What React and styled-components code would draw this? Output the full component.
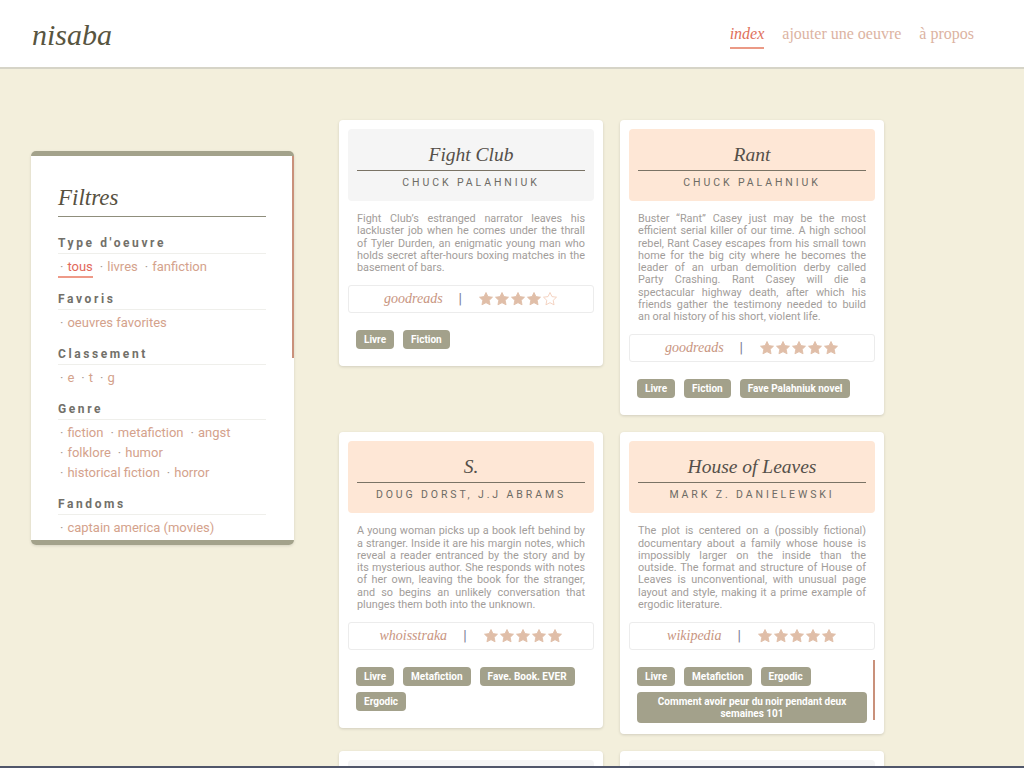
import React from "react";
import styled, { createGlobalStyle, css } from "styled-components";

const GlobalStyle = createGlobalStyle`
  * { box-sizing: border-box; }
  html { scrollbar-width: none; }
  body {
    margin: 0;
    background: #f3efdc;
    font-family: Roboto, "Noto Sans", sans-serif;
  }
`;

const thinScroll = css`
  &::-webkit-scrollbar { width: 2px; }
  &::-webkit-scrollbar-track { background: transparent; }
  &::-webkit-scrollbar-thumb { background: #c9917b; }
`;

/* drawn thumb: the headless browser hides native scrollbars */
const drawnThumb = (top, height) => css`
  position: relative;
  &::after {
    content: "";
    position: absolute;
    top: ${top}px;
    right: 0;
    width: 2px;
    height: ${height}px;
    background: #c9917b;
  }
`;

const Header = styled.header`
  height: 69px;
  background: #fff;
  border-bottom: 2px solid #d6d4c7;
  display: flex;
  align-items: center;
  justify-content: space-between;
  padding: 0 50px 0 32px;
`;

const Logo = styled.div`
  font-family: "Liberation Serif", serif;
  font-style: italic;
  font-size: 30px;
  color: #58553f;
  margin-top: 2px;
`;

const Nav = styled.nav`
  display: flex;
  gap: 18px;
  align-items: center;
`;

const NavLink = styled.a`
  font-family: "Liberation Serif", serif;
  font-size: 16px;
  color: ${(p) => (p.$active ? "#e0705a" : "#dcb3a2")};
  font-style: ${(p) => (p.$active ? "italic" : "normal")};
  border-bottom: 2px solid ${(p) => (p.$active ? "#eb9a86" : "transparent")};
  padding-bottom: 4px;
  margin-top: 6px;
  text-decoration: none;
`;

const Main = styled.main`
  display: flex;
  align-items: flex-start;
  gap: 45px;
  padding: 51px 0 40px 31px;
`;

const Sidebar = styled.aside`
  flex: none;
  width: 263px;
  height: 394px;
  margin-top: 31px;
  background: #fff;
  border-top: 5px solid #a3a28b;
  border-bottom: 5px solid #a3a28b;
  border-radius: 5px;
  box-shadow: 0 1px 3px rgba(0, 0, 0, 0.12);
  overflow-y: auto;
  padding: 0 28px 30px 27px;
  ${thinScroll}
  ${drawnThumb(0, 202)}
`;

const SideTitle = styled.h2`
  margin: 0;
  padding: 26px 0 2px;
  font-family: "Liberation Serif", serif;
  font-style: italic;
  font-weight: normal;
  font-size: 23px;
  line-height: 32px;
  color: #57513f;
  border-bottom: 1px solid #8f8e7c;
`;

const Section = styled.section`
  margin-top: ${(p) => (p.$first ? "19px" : "14px")};
`;

const SectionHead = styled.h3`
  margin: 0;
  font-size: 12px;
  line-height: 14px;
  font-weight: 700;
  letter-spacing: 2.6px;
  color: #727069;
  padding-bottom: 3px;
  border-bottom: 1px solid #efefeb;
`;

const LinkList = styled.div`
  margin-top: 3px;
  display: flex;
  flex-wrap: wrap;
  column-gap: 5px;
`;

const FilterLink = styled.a`
  font-size: 13px;
  line-height: 20px;
  height: ${(p) => (p.$active ? "21px" : "20px")};
  color: ${(p) => (p.$active ? "#e2685a" : "#d4a28c")};
  border-bottom: ${(p) => (p.$active ? "2px solid #ee9a88" : "none")};
  padding-left: 2px;
  text-decoration: none;
  white-space: nowrap;
`;

const Dot = styled.span`
  color: #a79a94;
  margin-right: 4px;
`;

const Grid = styled.div`
  display: grid;
  grid-template-columns: repeat(2, 264px);
  gap: 17px;
  align-items: start;
`;

const Card = styled.article`
  background: #fff;
  border-radius: 4px;
  box-shadow: 0 1px 3px rgba(0, 0, 0, 0.14);
  padding: 9px;
`;

const CardHead = styled.div`
  background: ${(p) => (p.$tone === "peach" ? "#fee7d6" : "#f5f5f5")};
  border-radius: 4px;
  padding: 11px 9px;
`;

const Title = styled.h2`
  margin: 0;
  font-family: "Liberation Serif", serif;
  font-style: italic;
  font-weight: normal;
  font-size: 19.5px;
  line-height: 30px;
  text-align: center;
  color: #55504a;
  border-bottom: 1px solid #7a7365;
`;

const Author = styled.div`
  margin-top: 5px;
  font-size: 10.5px;
  line-height: 14px;
  letter-spacing: 2.9px;
  text-transform: uppercase;
  text-align: center;
  color: #6d6b65;
`;

const Desc = styled.p`
  margin: 12px 9px 11px;
  font-size: 10.85px;
  line-height: 12.25px;
  text-align: justify;
  color: #a29d9a;
`;

const RatingBox = styled.div`
  height: 28px;
  border: 1px solid #ececec;
  border-radius: 3px;
  display: flex;
  align-items: center;
  justify-content: center;
  gap: 16px;
`;

const Source = styled.span`
  font-family: "Liberation Serif", serif;
  font-style: italic;
  font-size: 14px;
  color: #c8957f;
`;

const Sep = styled.span`
  font-size: 14px;
  color: #7a7e96;
`;

const Stars = styled.span`
  display: flex;
`;

const Tags = styled.div`
  margin-top: 9px;
  padding: 8px;
  display: flex;
  flex-wrap: wrap;
  gap: 6px 9px;
  max-height: 66px;
  overflow-y: auto;
  ${thinScroll}
  ${(p) => p.$overflow && drawnThumb(1, 60)}
`;

const Tag = styled.span`
  display: inline-flex;
  align-items: center;
  justify-content: center;
  text-align: center;
  min-height: 19px;
  padding: 3.5px 8px;
  line-height: 12px;
  border-radius: 4px;
  background: #a3a18b;
  color: #fff;
  font-size: 10px;
  font-weight: 700;
`;

const BottomBar = styled.div`
  position: fixed;
  left: 0;
  right: 0;
  bottom: 0;
  height: 2px;
  background: #50566a;
`;

const STAR =
  "M12 2.2l2.95 6.2 6.8.9-4.95 4.7 1.25 6.75L12 17.5l-6.05 3.25L7.2 14l-4.95-4.7 6.8-.9L12 2.2z";

function StarIcon({ filled }) {
  return (
    <svg width="16" height="16" viewBox="0 0 24 24">
      <path
        d={STAR}
        fill={filled ? "#e0bea8" : "none"}
        stroke={filled ? "#e0bea8" : "#f2cdb9"}
        strokeWidth="1.3"
        strokeLinejoin="round"
      />
    </svg>
  );
}

const filters = [
  { head: "Type d'oeuvre", links: ["tous", "livres", "fanfiction"], active: "tous" },
  { head: "Favoris", links: ["oeuvres favorites"] },
  { head: "Classement", links: ["e", "t", "g"] },
  {
    head: "Genre",
    links: ["fiction", "metafiction", "angst", "folklore", "humor", "historical fiction", "horror"],
  },
  {
    head: "Fandoms",
    links: [
      "captain america (movies)",
      "marvel cinematic universe",
      "harry potter",
      "the witcher",
      "good omens",
      "sherlock (tv)",
    ],
  },
  { head: "Auteurs", links: ["chuck palahniuk", "doug dorst", "mark z. danielewski"] },
  { head: "Langue", links: ["français", "english"] },
];

const books = [
  {
    title: "Fight Club",
    author: "Chuck Palahniuk",
    tone: "gray",
    desc: "Fight Club’s estranged narrator leaves his lackluster job when he comes under the thrall of Tyler Durden, an enigmatic young man who holds secret after-hours boxing matches in the basement of bars.",
    source: "goodreads",
    rating: 4,
    tags: ["Livre", "Fiction"],
  },
  {
    title: "Rant",
    author: "Chuck Palahniuk",
    tone: "peach",
    desc: "Buster “Rant” Casey just may be the most efficient serial killer of our time. A high school rebel, Rant Casey escapes from his small town home for the big city where he becomes the leader of an urban demolition derby called Party Crashing. Rant Casey will die a spectacular highway death, after which his friends gather the testimony needed to build an\u00A0oral history of his short, violent life.",
    source: "goodreads",
    rating: 5,
    tags: ["Livre", "Fiction", "Fave Palahniuk novel"],
  },
  {
    title: "S.",
    author: "Doug Dorst, J.J Abrams",
    tone: "peach",
    desc: "A young woman picks up a book left behind by a stranger. Inside it are his margin notes, which reveal a reader entranced by the story and by its mysterious author. She responds with notes of her own, leaving the book for the stranger, and so begins an unlikely conversation that plunges them both into the unknown.",
    source: "whoisstraka",
    rating: 5,
    tags: ["Livre", "Metafiction", "Fave. Book. EVER", "Ergodic"],
  },
  {
    title: "House of Leaves",
    author: "Mark Z. Danielewski",
    tone: "peach",
    desc: "The plot is centered on a (possibly fictional) documentary about a family whose house is impossibly larger on the inside than the outside. The format and structure of House of Leaves is unconventional, with unusual page layout and style, making it a prime example of ergodic literature.",
    source: "wikipedia",
    rating: 5,
    tags: ["Livre", "Metafiction", "Ergodic", "Comment avoir peur du noir pendant deux semaines 101"],
    overflow: true,
  },
  {
    title: "Invisible Monsters",
    author: "Chuck Palahniuk",
    tone: "gray",
    desc: "She’s a fashion model who has everything: a boyfriend, a career, a loyal best friend. But when a sudden freeway ‘accident’ leaves her disfigured and incapable of speech, she goes from being the beautiful center of attention to being an invisible monster.",
    source: "goodreads",
    rating: 4,
    tags: ["Livre", "Fiction"],
  },
  {
    title: "Choke",
    author: "Chuck Palahniuk",
    tone: "gray",
    desc: "Victor Mancini, a medical-school dropout, is an antihero for our deranged times. Needing to pay for his mother’s elder care, Victor has devised an ingenious scam.",
    source: "goodreads",
    rating: 4,
    tags: ["Livre", "Fiction"],
  },
];

function BookCard({ book }) {
  return (
    <Card>
      <CardHead $tone={book.tone}>
        <Title>{book.title}</Title>
        <Author>{book.author}</Author>
      </CardHead>
      <Desc>{book.desc}</Desc>
      <RatingBox>
        <Source>{book.source}</Source>
        <Sep>|</Sep>
        <Stars>
          {[0, 1, 2, 3, 4].map((i) => (
            <StarIcon key={i} filled={i < book.rating} />
          ))}
        </Stars>
      </RatingBox>
      <Tags $overflow={book.overflow}>
        {book.tags.map((t) => (
          <Tag key={t}>{t}</Tag>
        ))}
      </Tags>
    </Card>
  );
}

export default function App() {
  return (
    <>
      <GlobalStyle />
      <Header>
        <Logo>nisaba</Logo>
        <Nav>
          <NavLink $active>index</NavLink>
          <NavLink>ajouter une oeuvre</NavLink>
          <NavLink>à propos</NavLink>
        </Nav>
      </Header>
      <Main>
        <Sidebar>
          <SideTitle>Filtres</SideTitle>
          {filters.map((f, idx) => (
            <Section key={f.head} $first={idx === 0}>
              <SectionHead>{f.head}</SectionHead>
              <LinkList>
                {f.links.map((l) => (
                  <FilterLink key={l} $active={f.active === l}>
                    <Dot>·</Dot>
                    {l}
                  </FilterLink>
                ))}
              </LinkList>
            </Section>
          ))}
        </Sidebar>
        <Grid>
          {books.map((b) => (
            <BookCard key={b.title} book={b} />
          ))}
        </Grid>
      </Main>
      <BottomBar />
    </>
  );
}
